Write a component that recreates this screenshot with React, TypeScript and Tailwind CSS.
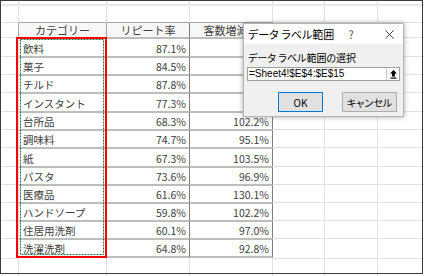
import React from 'react';

type Row = { cat: string; rep: string; inc: string; h: string };

const data: Row[] = [
  { cat: '飲料', rep: '87.1%', inc: '', h: 'h-[19px]' },
  { cat: '菓子', rep: '84.5%', inc: '', h: 'h-[18px]' },
  { cat: 'チルド', rep: '87.8%', inc: '', h: 'h-[18px]' },
  { cat: 'インスタント', rep: '77.3%', inc: '', h: 'h-[19px]' },
  { cat: '台所品', rep: '68.3%', inc: '102.2%', h: 'h-[18px]' },
  { cat: '調味料', rep: '74.7%', inc: '95.1%', h: 'h-[18px]' },
  { cat: '紙', rep: '67.3%', inc: '103.5%', h: 'h-[19px]' },
  { cat: 'パスタ', rep: '73.6%', inc: '96.9%', h: 'h-[18px]' },
  { cat: '医療品', rep: '61.6%', inc: '130.1%', h: 'h-[18px]' },
  { cat: 'ハンドソープ', rep: '59.8%', inc: '102.2%', h: 'h-[18px]' },
  { cat: '住居用洗剤', rep: '60.1%', inc: '97.0%', h: 'h-[18px]' },
  { cat: '洗濯洗剤', rep: '64.8%', inc: '92.8%', h: 'h-[20px]' },
];

function DataRow({ r, last }: { r: Row; last: boolean }) {
  const tb = last ? 'border-b-2' : '';
  return (
    <div className={`flex ${r.h}`}>
      <div className="w-[19px] shrink-0 border-t border-r border-[#e1e1e1]" />
      <div className={`w-[88px] shrink-0 border-t-2 ${tb} border-r border-t-[#bdbdbd] border-b-[#bdbdbd] border-r-[#a6a6a6] flex items-center pt-[2px] pl-[4px] text-[10.5px] text-[#404040] whitespace-nowrap`}>
        {r.cat}
      </div>
      <div className={`w-[83px] shrink-0 border-t-2 ${tb} border-r border-t-[#bdbdbd] border-b-[#bdbdbd] border-r-[#7f7f7f] flex items-center justify-end pt-[2px] pr-[3px] text-[10.5px] text-[#404040]`}>
        {r.rep}
      </div>
      <div className={`w-[83px] shrink-0 border-t-2 ${tb} border-r border-t-[#bdbdbd] border-b-[#bdbdbd] border-r-[#7f7f7f] flex items-center justify-end pt-[2px] pr-[3px] text-[10.5px] text-[#404040]`}>
        {r.inc}
      </div>
      <div className="w-[52px] shrink-0 border-t border-r border-[#e1e1e1]" />
      <div className="w-[53px] shrink-0 border-t border-r border-[#e1e1e1]" />
      <div className="flex-1 border-t border-[#e1e1e1]" />
    </div>
  );
}

export default function App() {
  return (
    <div className="relative w-[424px] h-[276px] bg-white overflow-hidden font-['Noto_Sans_CJK_JP','Noto_Sans',sans-serif]">
      {/* spreadsheet grid */}
      <div className="flex flex-col">
        <div className="flex h-[6px] border-b-2 border-[#e9e9e9]">
          <div className="w-[19px] shrink-0 border-r border-[#e1e1e1]" />
          <div className="w-[88px] shrink-0 border-r border-[#e1e1e1]" />
          <div className="w-[83px] shrink-0 border-r border-[#e1e1e1]" />
          <div className="w-[83px] shrink-0 border-r border-[#e1e1e1]" />
          <div className="w-[52px] shrink-0 border-r border-[#e1e1e1]" />
          <div className="w-[53px] shrink-0 border-r border-[#e1e1e1]" />
          <div className="flex-1" />
        </div>
        <div className="flex h-[17px]">
          <div className="w-[19px] shrink-0 border-r border-b border-[#e1e1e1]" />
          <div className="w-[88px] shrink-0 border-r border-r-[#e1e1e1] border-b border-b-[#a6a6a6]" />
          <div className="w-[83px] shrink-0 border-r border-r-[#e1e1e1] border-b border-b-[#a6a6a6]" />
          <div className="w-[83px] shrink-0 border-r border-r-[#e1e1e1] border-b border-b-[#a6a6a6]" />
          <div className="w-[52px] shrink-0 border-r border-b border-[#e1e1e1]" />
          <div className="w-[53px] shrink-0 border-r border-b border-[#e1e1e1]" />
          <div className="flex-1 border-b border-[#e1e1e1]" />
        </div>
        {/* header */}
        <div className="flex h-[14px]">
          <div className="w-[19px] shrink-0 border-r border-[#a6a6a6]" />
          <div className="w-[88px] shrink-0 border-r border-[#a6a6a6] bg-[#f7f7f7] flex items-center justify-center pt-[1px] text-[11px] text-[#404040]">
            カテゴリー
          </div>
          <div className="w-[83px] shrink-0 border-r border-[#7f7f7f] bg-[#f7f7f7] flex items-center justify-center pt-[1px] text-[11px] text-[#404040]">
            リピート率
          </div>
          <div className="w-[83px] shrink-0 border-r border-[#7f7f7f] bg-[#f7f7f7] flex items-center justify-center pt-[1px] text-[11px] text-[#404040] whitespace-nowrap overflow-hidden">
            客数増減率
          </div>
          <div className="w-[52px] shrink-0 border-r border-[#e1e1e1]" />
          <div className="w-[53px] shrink-0 border-r border-[#e1e1e1]" />
          <div className="flex-1" />
        </div>
        {data.map((r, i) => (
          <DataRow key={r.cat} r={r} last={i === data.length - 1} />
        ))}
        <div className="flex h-[18px]">
          <div className="w-[19px] shrink-0 border-t border-r border-[#e1e1e1]" />
          <div className="w-[88px] shrink-0 border-r border-[#e1e1e1]" />
          <div className="w-[83px] shrink-0 border-r border-[#e1e1e1]" />
          <div className="w-[83px] shrink-0 border-r border-[#e1e1e1]" />
          <div className="w-[52px] shrink-0 border-t border-r border-[#e1e1e1]" />
          <div className="w-[53px] shrink-0 border-t border-r border-[#e1e1e1]" />
          <div className="flex-1 border-t border-[#e1e1e1]" />
        </div>
      </div>

      {/* red selection box */}
      <div className="absolute left-[16px] top-[37px] w-[91px] h-[221px] border-2 border-[#ff0000]" />

      {/* marching ants */}
      <svg className="absolute left-[20px] top-[39px]" width="85" height="217" viewBox="0 0 85 217">
        <rect x="0.5" y="0.5" width="83" height="215" fill="none" stroke="#217346" strokeWidth="1" strokeDasharray="2 1" />
      </svg>

      {/* window frame */}
      <div className="absolute left-0 top-0 w-[423px] h-[274px] border border-[#3c3c3c] pointer-events-none" />

      {/* dialog */}
      <div className="absolute left-[243px] top-[23px] w-[161px] h-[94px] border border-[#b4b4b4] bg-[#f0f0f0] shadow-[0_0_5px_rgba(0,0,0,0.35)] flex flex-col [font-feature-settings:'palt']">
        <div className="h-[20px] bg-white flex items-center pl-[4px] pr-[2px] text-[11px] text-[#000]">
          <span className="flex-1 whitespace-nowrap">データ ラベル範囲</span>
          <span className="w-[20px] text-center text-[#555] mr-[16px]">?</span>
          <span className="w-[24px] flex justify-center">
            <svg width="9" height="9" viewBox="0 0 9 9">
              <path d="M0.5 0.5 L8.5 8.5 M8.5 0.5 L0.5 8.5" stroke="#333" strokeWidth="0.9" />
            </svg>
          </span>
        </div>
        <div className="flex flex-col pt-[8px] px-[3px]">
          <div className="h-[12px] leading-[12px] text-[10px] text-[#000] whitespace-nowrap pl-[1px]">
            データ ラベル範囲の選択
          </div>
          <div className="mt-[3px] h-[14px] bg-white border border-[#a0a0a0] flex items-stretch">
            <div className="flex-1 flex items-center pl-[1px] text-[10px] leading-none text-[#000] font-['Liberation_Sans',sans-serif]">
              =Sheet4!$E$4:$E$15
            </div>
            <div className="w-[13px] border-l border-[#c8c8c8] flex items-center justify-center">
              <svg width="7" height="9" viewBox="0 0 7 9">
                <path d="M3.5 0 L7 3.5 H5 V6.5 H2 V3.5 H0 Z" fill="#000" />
                <rect x="0.5" y="7.5" width="6" height="1.2" fill="#000" />
              </svg>
            </div>
          </div>
          <div className="mt-[11px] flex justify-end gap-[19px] pr-[3px]">
            <div className="w-[45px] h-[20px] bg-[#e1e1e1] border border-[#0078d7] flex items-center justify-center text-[10px] text-[#000]">
              OK
            </div>
            <div className="w-[55px] h-[20px] bg-[#e1e1e1] border border-[#adadad] flex items-center justify-center text-[10px] text-[#000] whitespace-nowrap">
              キャンセル
            </div>
          </div>
        </div>
      </div>
    </div>
  );
}
